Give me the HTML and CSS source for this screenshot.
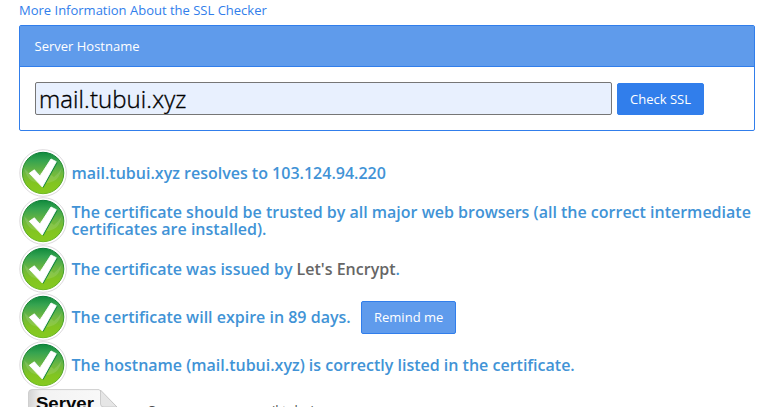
FILE: index.html
```html
<!DOCTYPE html>
<html lang="en">
<head>
<meta charset="utf-8">
<title>SSL Checker</title>
<link rel="stylesheet" href="styles.css">
</head>
<body>
<svg class="defs" width="0" height="0" aria-hidden="true">
  <defs>
    <linearGradient id="disc" x1="0" y1="0" x2="0" y2="1">
      <stop offset="0" stop-color="#0f8a3c"/>
      <stop offset=".2" stop-color="#35a350"/>
      <stop offset=".5" stop-color="#6fb840"/>
      <stop offset=".75" stop-color="#82c520"/>
      <stop offset="1" stop-color="#86ca20"/>
    </linearGradient>
    <linearGradient id="rim" x1="0" y1="0" x2="0" y2="1">
      <stop offset="0" stop-color="#087a35"/>
      <stop offset="1" stop-color="#6fb923"/>
    </linearGradient>
    <linearGradient id="paper" x1="0" y1="0" x2="1" y2="0">
      <stop offset="0" stop-color="#d4d4d4"/>
      <stop offset=".15" stop-color="#f3f3f3"/>
      <stop offset="1" stop-color="#fafafa"/>
    </linearGradient>
    <symbol id="check" viewBox="0 0 48 48">
      <circle cx="24.1" cy="24" r="23.3" fill="#fff" stroke="#dcd9dc" stroke-width="1"/>
      <circle cx="24.1" cy="24" r="20.7" fill="url(#disc)" stroke="url(#rim)" stroke-width="1"/>
      <path d="M5 19Q12 26 13 28Q24 19 35 28Q40 24 43 19Q40 30 35 32Q24 37 13 32Q7 28 5 19Z" fill="#fff" opacity=".12"/>
      <path d="M10.3 24.3L15.4 20.8L21 27L32 10L37.5 13L23.3 38.3Z" fill="#12873e" transform="translate(1.1 .5)"/>
      <path d="M10.3 24.3L15.4 20.8L21 27L32 10L37.3 12.7L23.3 38Z" fill="#fff" stroke="#fff" stroke-width=".9"/>
    </symbol>
  </defs>
</svg>
<main class="page">
  <a class="more">More Information About the SSL Checker</a>
  <section class="panel">
    <h2 class="panel-title">Server Hostname</h2>
    <form class="panel-body">
      <input class="host" type="text" value="mail.tubui.xyz" aria-label="Server Hostname">
      <button class="btn check-btn" type="button">Check SSL</button>
    </form>
  </section>
  <ul class="results">
    <li><svg class="icon"><use href="#check"/></svg><p>mail.tubui.xyz resolves to 103.124.94.220</p></li>
    <li><svg class="icon"><use href="#check"/></svg><p>The certificate should be trusted by all major web browsers (all the correct intermediate certificates are installed).</p></li>
    <li><svg class="icon"><use href="#check"/></svg><p>The certificate was issued by <a class="issuer">Let's Encrypt</a>.</p></li>
    <li><svg class="icon"><use href="#check"/></svg><p>The certificate will expire in 89 days.</p><button class="btn remind" type="button">Remind me</button></li>
    <li><svg class="icon"><use href="#check"/></svg><p>The hostname (mail.tubui.xyz) is correctly listed in the certificate.</p></li>
  </ul>
  <div class="cert">
    <svg class="cert-icon" width="98" height="80" viewBox="0 0 98 80">
      <path d="M9.5 80V4Q9.5 .6 13 .6H80L98 18V80Z" fill="url(#paper)" stroke="#cfcfcf"/>
      <path d="M81.5 1V15Q81.5 18 85 18H98Z" fill="#e6e6e6" stroke="#bdbdbd" stroke-width=".7"/>
      <text class="cert-label" x="16.9" y="19.8" textLength="58" lengthAdjust="spacingAndGlyphs">Server</text>
    </svg>
    <p class="cert-text"><b>Common name:</b> mail.tubui.xyz</p>
  </div>
</main>
</body>
</html>
```
FILE: styles.css
```css
* { box-sizing: border-box; }
html, body { height: 100%; }
body {
  margin: 0;
  overflow: hidden;
  background: #fff;
  font-family: "Open Sans", "Noto Sans", sans-serif;
  font-size: 13px;
  color: #4d4d4d;
}
.defs { display: block; }
.page { width: 736px; margin-left: 19px; }
.more {
  display: block;
  height: 25px;
  line-height: 20px;
  color: #317eeb;
}
.panel {
  height: 106px;
  border: 1px solid #317eeb;
  border-radius: 2px;
}
.panel-title {
  height: 41px;
  margin: 0;
  padding-left: 14.5px;
  border-bottom: 1px solid #317eeb;
  background: #5f9beb;
  color: #fff;
  font-size: 13px;
  font-weight: 400;
  line-height: 40px;
}
.panel-body { display: flex; gap: 5px; padding: 15px; }
.host {
  width: 577px;
  height: 33px;
  padding: 1px 3px;
  border: 1px solid #767676;
  border-radius: 2px;
  background: #e8f0fe;
  color: #000;
  font: 300 24px "Open Sans", sans-serif;
  letter-spacing: .08px;
  -webkit-text-stroke: .35px #000;
}
.btn {
  padding: 0;
  border: 1px solid #317eeb;
  border-radius: 2px;
  color: #fff;
  font: 13px "Open Sans", sans-serif;
}
.check-btn { width: 87px; height: 32px; margin-top: 1px; background: #317eeb; }
.results { list-style: none; margin: 18px 0 0; padding: 0; }
.results li { display: flex; align-items: center; height: 48px; }
.results p {
  margin: 0 0 0 4.5px;
  color: #4193d6;
  font-size: 16px;
  font-weight: 600;
  line-height: 17px;
}
.icon { flex: none; width: 48px; height: 48px; }
.issuer { color: #666; }
.remind { width: 95px; height: 33px; margin-left: 10px; padding-left: 1px; background: #5f9bec; }
.cert { display: flex; }
.cert-icon { flex: none; }
.cert-label { font: bold 17px "Liberation Sans", Arial, sans-serif; fill: #080808; }
.cert-text { margin: 12px 0 0 30px; line-height: 18px; }
```
